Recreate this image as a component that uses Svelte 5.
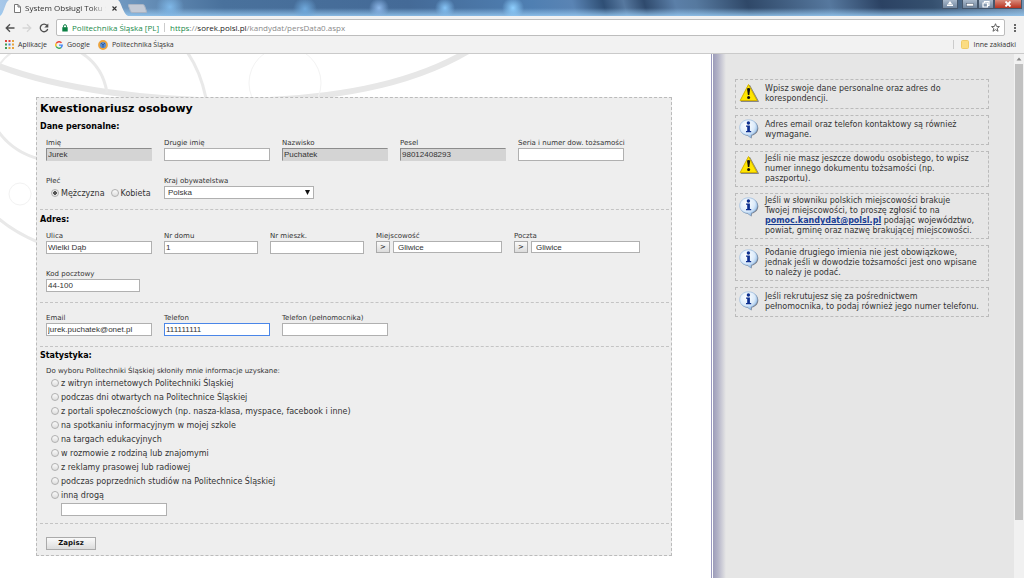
<script lang="ts">
    type Note = { kind: 'warning' | 'info'; text: string; mail?: string; rest?: string };

    // Personal data
    let firstName = $state('Jurek');
    let secondName = $state('');
    let lastName = $state('Puchatek');
    let pesel = $state('98012408293');
    let documentNumber = $state('');
    let gender = $state('m');
    let country = $state('Polska');

    // Address and contact
    let street = $state('Wielki Dąb');
    let house = $state('1');
    let flat = $state('');
    let town = $state('Gliwice');
    let post = $state('Gliwice');
    let postCode = $state('44-100');
    let email = $state('jurek.puchatek@onet.pl');
    let phone = $state('111111111');
    let proxyPhone = $state('');

    // Survey
    let source = $state('');
    let otherSource = $state('');

    let address = $state('https://sorek.polsl.pl/kandydat/persData0.aspx');

    const sources = [
        'z witryn internetowych Politechniki Śląskiej',
        'podczas dni otwartych na Politechnice Śląskiej',
        'z portali społecznościowych (np. nasza-klasa, myspace, facebook i inne)',
        'na spotkaniu informacyjnym w mojej szkole',
        'na targach edukacyjnych',
        'w rozmowie z rodziną lub znajomymi',
        'z reklamy prasowej lub radiowej',
        'podczas poprzednich studiów na Politechnice Śląskiej',
        'inną drogą'
    ];

    // Line breaks in the texts are kept by white-space: pre-line
    const notes: Note[] = [
        { kind: 'warning', text: 'Wpisz swoje dane personalne oraz adres do\nkorespondencji.' },
        { kind: 'info', text: 'Adres email oraz telefon kontaktowy są również\nwymagane.' },
        { kind: 'warning', text: 'Jeśli nie masz jeszcze dowodu osobistego, to wpisz\nnumer innego dokumentu tożsamości (np.\npaszportu).' },
        {
            kind: 'info',
            text: 'Jeśli w słowniku polskich miejscowości brakuje\nTwojej miejscowości, to proszę zgłosić to na\n',
            mail: 'pomoc.kandydat@polsl.pl',
            rest: ' podając województwo,\npowiat, gminę oraz nazwę brakującej miejscowości.'
        },
        { kind: 'info', text: 'Podanie drugiego imienia nie jest obowiązkowe,\njednak jeśli w dowodzie tożsamości jest ono wpisane\nto należy je podać.' },
        { kind: 'info', text: 'Jeśli rekrutujesz się za pośrednictwem\npełnomocnika, to podaj również jego numer telefonu.' }
    ];

    const appColors = ['#e0433a', '#e0433a', '#e8a33d', '#3f9b57', '#4a80d8', '#e8a33d', '#3f9b57', '#e8a33d', '#e8a33d'];

    function focusOnMount(node: HTMLInputElement) {
        node.focus();
        node.setSelectionRange(node.value.length, node.value.length);
    }
</script>

<div class="window">
    <header>
        <div class="titlebar">
            <div class="tab">
                <svg class="tab-shape" viewBox="0 0 130 16" preserveAspectRatio="none" aria-hidden="true">
                    <path d="M0 16 C4 14 5 2 9 0 H119 C122 1 124 14 129 16 Z" fill="#f2f2f2" />
                </svg>
                <svg class="page-icon" width="7" height="9" viewBox="0 0 7 9" aria-hidden="true">
                    <path d="M.5 .5 H4 L6.500 3 V8.500 H.5 Z M4 .5 V3 H6.500" fill="#fff" stroke="#777" />
                </svg>
                <span class="tab-title">System Obsługi Toku Studiów</span>
                <button class="tab-close" aria-label="Zamknij kartę">
                    <svg width="5" height="5" viewBox="0 0 5 5"><path d="M.5 .5 L4.500 4.500 M4.500 .5 L.5 4.500" stroke="#333" stroke-width="1.100" /></svg>
                </button>
            </div>
            <button class="new-tab" aria-label="Nowa karta"></button>
            <div class="window-buttons">
                <button class="user" aria-label="Użytkownik">
                    <svg width="8" height="6" viewBox="0 0 8 6"><path d="M4 0 L6 3 H2 Z M1 3.500 H7 V5 H1 Z" fill="#fff" /></svg>
                </button>
                <button class="minimise" aria-label="Minimalizuj">
                    <svg width="8" height="6" viewBox="0 0 8 6"><rect x=".5" y="2.500" width="7" height="2.500" fill="#fff" stroke="#4d5b6d" stroke-width=".5" /></svg>
                </button>
                <button class="restore" aria-label="Przywróć">
                    <svg width="8" height="7" viewBox="0 0 8 7"><path d="M2.500 1.500 V.5 H7 V4.500 H6 M1 2 H5.500 V6 H1 Z" fill="none" stroke="#fff" stroke-width="1.200" /></svg>
                </button>
                <button class="close" aria-label="Zamknij">
                    <svg width="8" height="6" viewBox="0 0 8 6"><path d="M1.500 .5 L6.500 5.500 M6.500 .5 L1.500 5.500" stroke="#fff" stroke-width="1.800" /></svg>
                </button>
            </div>
        </div>

        <div class="toolbar">
            <button aria-label="Wstecz">
                <svg width="10" height="10" viewBox="0 0 10 10"><path d="M9.500 5 H1.500 M5 1.200 L1.200 5 L5 8.800" fill="none" stroke="#505050" stroke-width="1.300" /></svg>
            </button>
            <button aria-label="Dalej">
                <svg width="10" height="10" viewBox="0 0 10 10"><path d="M.5 5 H8.500 M5 1.200 L8.800 5 L5 8.800" fill="none" stroke="#d6d6d6" stroke-width="1.300" /></svg>
            </button>
            <button aria-label="Odśwież">
                <svg width="10" height="10" viewBox="0 0 10 10">
                    <path d="M8 2.500 A3.800 3.800 0 1 0 8.700 6" fill="none" stroke="#505050" stroke-width="1.300" />
                    <path d="M9.300 .5 V4.500 H5.300 Z" fill="#505050" />
                </svg>
            </button>
            <div class="omnibox">
                <svg width="6" height="8" viewBox="0 0 6 8" aria-hidden="true">
                    <path d="M1.500 3.500 V2.200 A1.500 1.500 0 0 1 4.500 2.200 V3.500" fill="none" stroke="#0b8043" />
                    <rect x=".3" y="3.200" width="5.400" height="4.300" fill="#0b8043" />
                </svg>
                <span class="owner">Politechnika Śląska [PL]</span>
                <div class="url">
                    <span class="scheme">https</span>://<span class="host">sorek.polsl.pl</span>/kandydat/persData0.aspx
                    <input type="text" aria-label="Adres strony" bind:value={address} />
                </div>
                <button class="star" aria-label="Dodaj zakładkę">
                    <svg width="9" height="9" viewBox="0 0 10 10"><path d="M5 .8 L6.200 3.800 L9.400 4 L6.900 6 L7.800 9.200 L5 7.400 L2.200 9.200 L3.100 6 L.6 4 L3.800 3.800 Z" fill="none" stroke="#555" /></svg>
                </button>
            </div>
            <button class="more" aria-label="Menu">
                <svg width="4" height="10" viewBox="0 0 4 10"><path d="M1 1 H3 V3 H1 Z M1 4 H3 V6 H1 Z M1 7 H3 V9 H1 Z" fill="#666" /></svg>
            </button>
        </div>

        <nav class="bookmarks">
            <a href="#apps">
                <svg width="9" height="9" viewBox="0 0 9 9" aria-hidden="true">
                    {#each appColors as color, i}
                        <rect x={(i % 3) * 3.5} y={Math.floor(i / 3) * 3.5} width="2" height="2" fill={color} />
                    {/each}
                </svg>
                Aplikacje
            </a>
            <a href="#google">
                <svg width="8" height="8" viewBox="0 0 8 8" fill="none" stroke-width="1.400" aria-hidden="true">
                    <path d="M6.500 1.800 A3.200 3.200 0 0 0 1.200 2.500" stroke="#ea4335" />
                    <path d="M1.200 2.500 A3.200 3.200 0 0 0 1.200 5.500" stroke="#fbbc05" />
                    <path d="M1.200 5.500 A3.200 3.200 0 0 0 6 6.600" stroke="#34a853" />
                    <path d="M6 6.600 A3.200 3.200 0 0 0 7.200 4.100 H4" stroke="#4285f4" />
                </svg>
                Google
            </a>
            <a href="#polsl">
                <svg width="10" height="10" viewBox="0 0 10 10" aria-hidden="true">
                    <circle cx="5" cy="5" r="4" fill="#5b8ed0" stroke="#eda43c" stroke-width="1.800" />
                    <path d="M3 3 L5 5 L7 3 M5 5 V7.500" stroke="#2f5a9c" fill="none" />
                </svg>
                Politechnika Śląska
            </a>
            <a class="other" href="#other">
                <svg width="8" height="9" viewBox="0 0 8 9" aria-hidden="true">
                    <rect x=".5" y=".5" width="7" height="8" rx="1" fill="#fbdc82" stroke="#efcb68" />
                </svg>
                Inne zakładki
            </a>
        </nav>
    </header>

    <div class="page">
        <main>
            <svg class="backdrop" width="480" height="220" viewBox="0 54 480 220" fill="none" aria-hidden="true">
                <path d="M-4 65 C60 90 150 100 230 101 C330 100 410 86 470 50" stroke="#e7e7e7" stroke-width="6" />
                <path d="M0 64 Q5 57 11 53" stroke="#ececec" stroke-width="2" />
                <path d="M80 52 Q103 66 107 93" stroke="#e9e9e9" stroke-width="3" />
                <path d="M187 52 Q200 70 206 98" stroke="#e9e9e9" stroke-width="3" />
                <circle cx="285" cy="83" r="36" stroke="#f3f3f3" />
                <path d="M-2 131 Q14 153 40 159" stroke="#e9e9e9" stroke-width="3" />
                <circle cx="20" cy="194" r="11" stroke="#f2f2f2" />
                <path d="M-2 218 Q14 232 40 243" stroke="#e9e9e9" stroke-width="3" />
            </svg>

            <form class="panel" onsubmit={(e) => e.preventDefault()}>
                <h1>Kwestionariusz osobowy</h1>

                <section>
                    <h2>Dane personalne:</h2>
                    <div class="row">
                        <label class="field">Imię<input type="text" readonly bind:value={firstName} /></label>
                        <label class="field">Drugie imię<input type="text" bind:value={secondName} /></label>
                        <label class="field">Nazwisko<input type="text" readonly bind:value={lastName} /></label>
                        <label class="field">Pesel<input type="text" readonly bind:value={pesel} /></label>
                        <label class="field">Seria i numer dow. tożsamości<input type="text" bind:value={documentNumber} /></label>
                    </div>
                    <div class="row">
                        <div class="field" role="radiogroup" aria-labelledby="gender-label">
                            <span id="gender-label">Płeć</span>
                            <div class="genders">
                                <label class="choice"><input type="radio" name="gender" value="m" bind:group={gender} />Mężczyzna</label>
                                <label class="choice"><input type="radio" name="gender" value="k" bind:group={gender} />Kobieta</label>
                            </div>
                        </div>
                        <label class="field country">
                            Kraj obywatelstwa
                            <select bind:value={country}>
                                <option>Polska</option>
                            </select>
                        </label>
                    </div>
                </section>

                <section>
                    <h2>Adres:</h2>
                    <div class="row">
                        <label class="field">Ulica<input type="text" bind:value={street} /></label>
                        <label class="field short">Nr domu<input type="text" bind:value={house} /></label>
                        <label class="field short">Nr mieszk.<input type="text" bind:value={flat} /></label>
                        <div class="field lookup">
                            <label for="town">Miejscowość</label>
                            <div class="lookup-row">
                                <button type="button" aria-label="Wybierz miejscowość">&gt;</button>
                                <input id="town" type="text" bind:value={town} />
                            </div>
                        </div>
                        <div class="field lookup">
                            <label for="post">Poczta</label>
                            <div class="lookup-row">
                                <button type="button" aria-label="Wybierz pocztę">&gt;</button>
                                <input id="post" type="text" bind:value={post} />
                            </div>
                        </div>
                    </div>
                    <div class="row">
                        <label class="field short">Kod pocztowy<input type="text" bind:value={postCode} /></label>
                    </div>
                </section>

                <section>
                    <div class="row contact">
                        <label class="field">Email<input type="text" bind:value={email} /></label>
                        <label class="field">Telefon<input type="text" bind:value={phone} use:focusOnMount /></label>
                        <label class="field">Telefon (pełnomocnika)<input type="text" bind:value={proxyPhone} /></label>
                    </div>
                </section>

                <section class="survey">
                    <h2>Statystyka:</h2>
                    <p id="survey-label">Do wyboru Politechniki Śląskiej skłoniły mnie informacje uzyskane:</p>
                    <div class="sources" role="radiogroup" aria-labelledby="survey-label">
                        {#each sources as item}
                            <label class="choice"><input type="radio" name="source" value={item} bind:group={source} />{item}</label>
                        {/each}
                        <input class="other-source" type="text" aria-label="Inna droga" bind:value={otherSource} />
                    </div>
                </section>

                <div class="actions">
                    <button type="submit">Zapisz</button>
                </div>
            </form>
        </main>

        <aside>
            {#each notes as note}
                <div class="note">
                    {#if note.kind === 'warning'}
                        <svg width="20" height="20" viewBox="0 0 20 20" aria-hidden="true">
                            <path d="M10.500 2 L19.500 18.500 H2 Z" fill="#888" stroke="#888" stroke-linejoin="round" />
                            <path d="M9.500 1.500 L18 17.500 H1.200 Z" fill="#ffe500" stroke="#d4b400" stroke-linejoin="round" />
                            <path d="M8 5.500 Q9.600 4.300 11.200 5.500 L10.300 12 H8.900 Z" fill="#111" />
                            <circle cx="9.600" cy="14.600" r="1.500" fill="#111" />
                        </svg>
                    {:else}
                        <svg width="20" height="20" viewBox="0 0 20 20" aria-hidden="true">
                            <defs>
                                <radialGradient id="bubble" cx=".4" cy=".3" r=".75">
                                    <stop offset="0" stop-color="#fff" />
                                    <stop offset=".6" stop-color="#dcebfa" />
                                    <stop offset="1" stop-color="#7fb0e4" />
                                </radialGradient>
                            </defs>
                            <path d="M10 1.500 C15.500 1.500 19.300 4.800 19.300 9.300 C19.300 13 16.500 15.800 13 16.600 L12.500 19.500 L9 16.900 C4 16.500 1.500 13 1.500 9.300 Z" fill="#6f7480" />
                            <path d="M9.500 .8 C14.600 .8 18.300 4.200 18.300 8.600 C18.300 12.200 15.700 15 12.200 15.900 L11.800 18.800 L8.600 16.300 C3.900 15.900 .7 12.700 .7 8.600 C.7 4.200 4.400 .8 9.500 .8 Z" fill="url(#bubble)" stroke="#8fb3dc" stroke-width=".6" />
                            <circle cx="9.400" cy="4" r="1.700" fill="#0d2f8f" />
                            <path d="M7 6.600 H10.900 V12 H12.200 V13.200 H7 V12 H8.200 V7.800 H7 Z" fill="#0d2f8f" />
                        </svg>
                    {/if}
                    <p>{note.text}{#if note.mail}<a href="mailto:{note.mail}">{note.mail}</a>{note.rest}{/if}</p>
                </div>
            {/each}
        </aside>

        <div class="scrollbar" aria-hidden="true">
            <div class="scroll-arrow">
                <svg width="6" height="4" viewBox="0 0 6 4"><path d="M3 .5 L5.500 3.500 H.5 Z" fill="#888" /></svg>
            </div>
            <div class="thumb"></div>
        </div>
    </div>
</div>

<style>
    :global(body) {
        margin: 0;
        background: #fff;
    }

    .window {
        display: flex;
        flex-direction: column;
        min-height: 100vh;
        font-family: "DejaVu Sans", Verdana, sans-serif;
        font-size: 8px;
        color: #333;
    }

    * {
        box-sizing: border-box;
    }

    button {
        margin: 0;
        padding: 0;
        border: 0;
        background: none;
        font: inherit;
        color: inherit;
    }

    svg {
        display: block;
        flex: none;
    }

    /* Browser frame */
    header {
        font-family: "Open Sans", "Segoe UI", sans-serif;
        background: #f2f2f2;
        border-bottom: 1px solid #cacaca;
    }

    .titlebar {
        display: flex;
        align-items: flex-start;
        height: 16px;
        background:
            radial-gradient(circle at 170px 7px, #7fb8e8 0, transparent 14px),
            radial-gradient(circle at 305px 9px, #6fa9dc 0, transparent 12px),
            radial-gradient(circle at 379px 8px, #8db8ea 0, transparent 10px),
            radial-gradient(circle at 445px 8px, #86c4f6 0, transparent 10px),
            radial-gradient(circle at 513px 8px, #8fd0ff 0, transparent 11px),
            linear-gradient(to bottom, transparent 8px, rgba(150, 200, 240, 0.85) 16px),
            linear-gradient(75deg, #a9c9ea 0, #7fa8cf 8%, #49719c 22%, #446a97 40%, #4f7fb2 52%, #5a84b4 56%, #2f4f75 59%, #56789f 61%, #2f4a6d 63%, #5b7fa8 66%, #56799f 68%, #2f4868 73%, #56789e 81%, #2b4263 86%, #35506f 91%, #7696b6 100%);
    }

    .tab {
        position: relative;
        display: flex;
        align-items: center;
        width: 129px;
        height: 16px;
        padding: 0 12px 0 14px;
    }

    .tab-shape {
        position: absolute;
        inset: 0;
        width: 100%;
        height: 100%;
    }

    .page-icon,
    .tab-title,
    .tab-close {
        position: relative;
    }

    .tab-title {
        flex: 1;
        margin: 0 6px 0 4px;
        overflow: hidden;
        white-space: nowrap;
        line-height: 14px;
        mask-image: linear-gradient(to right, #000 82%, transparent);
    }

    .new-tab {
        width: 17px;
        height: 9px;
        margin-top: 4px;
        background: #c3cad6;
        border: 1px solid #a9b4c4;
        border-radius: 2px;
        transform: skewX(20deg);
    }

    .window-buttons {
        display: flex;
        margin-left: auto;
        margin-right: 2px;
    }

    .window-buttons button {
        display: flex;
        align-items: center;
        justify-content: center;
        width: 16px;
        height: 9px;
        background: linear-gradient(#a9b9cb, #71869f);
        border: 1px solid #45566b;
        border-top: 0;
    }

    .window-buttons .user {
        margin-right: 4px;
    }

    .window-buttons .close {
        width: 28px;
        background: linear-gradient(#d98a7a, #b83320);
    }

    .toolbar {
        display: flex;
        align-items: center;
        gap: 7px;
        padding: 3px 6px 0 5px;
    }

    .omnibox {
        flex: 1;
        display: flex;
        align-items: center;
        height: 17px;
        padding: 0 4px 0 5px;
        background: #fff;
        border: 1px solid #bdbdbd;
        border-radius: 2px;
    }

    .owner {
        margin-left: 4px;
        padding-right: 5px;
        border-right: 1px solid #ccc;
        line-height: 9px;
        color: #1b8a4b;
    }

    .url {
        position: relative;
        flex: 1;
        margin-left: 5px;
        line-height: 15px;
        color: #8a8a8a;
    }

    .scheme {
        color: #1b8a4b;
    }

    .host {
        color: #222;
    }

    .more {
        padding: 0 1px;
    }

    .bookmarks {
        display: flex;
        align-items: center;
        gap: 8px;
        height: 17px;
        padding: 0 8px 0 5px;
        font-size: 7px;
    }

    .bookmarks a {
        display: flex;
        align-items: center;
        gap: 4px;
        color: #333;
        text-decoration: none;
    }

    .bookmarks .other {
        margin-left: auto;
        padding-left: 7px;
        border-left: 1px solid #ccc;
    }

    /* Page */
    .page {
        flex: 1;
        display: flex;
    }

    main {
        position: relative;
        flex: 1;
        padding: 43px 39px 22px 36px;
    }

    .backdrop {
        position: absolute;
        top: 0;
        left: 0;
    }

    .panel {
        position: relative;
        padding: 2px 2px 2px 3px;
        background: #eee;
        border: 1px dashed #bbb;
    }

    h1,
    h2,
    p {
        margin: 0;
    }

    h1 {
        font-size: 11px;
        line-height: 17px;
        color: #000;
    }

    h2 {
        font-size: 8px;
        line-height: 12px;
        color: #000;
    }

    section {
        padding: 4px 0 10px;
        border-bottom: 1px dashed #c4c4c4;
    }

    section h2 {
        margin-bottom: 6px;
    }

    .row {
        display: flex;
        gap: 12px;
        margin-left: 6px;
    }

    .row + .row {
        margin-top: 16px;
    }

    .field {
        display: flex;
        flex-direction: column;
        width: 106px;
        font-size: 7px;
        line-height: 9px;
        white-space: nowrap;
    }

    .field.short {
        width: 94px;
    }

    .field.country {
        width: 150px;
    }

    .field.lookup {
        width: 126px;
    }

    input[type="text"],
    select {
        width: 100%;
        height: 13px;
        margin: 0;
        padding: 0 1px;
        background: #fff;
        border: 1px solid #b0b0b0;
        border-radius: 0;
        font-family: "Liberation Sans", Arial, sans-serif;
        font-size: 8px;
        line-height: 11px;
        color: #333;
        outline: none;
    }

    input[type="text"]:focus {
        border-color: #4a86e8;
    }

    input[type="text"]:read-only {
        background: #d4d4d4;
        border-color: #8c8c8c #d4d4d4 #d4d4d4 #8c8c8c;
    }

    /* Editable layer over the coloured address */
    .url input[type="text"] {
        position: absolute;
        inset: 0;
        height: 100%;
        padding: 0;
        border: 0;
        background: none;
        color: transparent;
    }

    select {
        appearance: none;
        padding: 0 3px;
        background: #fff url("data:image/svg+xml,%3Csvg xmlns='http://www.w3.org/2000/svg' width='5' height='5'%3E%3Cpath d='M0 0H5L2.500 5Z' fill='%23111'/%3E%3C/svg%3E") no-repeat right 3px center;
    }

    .genders {
        display: flex;
        gap: 6px;
        padding: 3px 0 0 5px;
    }

    .choice {
        display: flex;
        align-items: center;
        gap: 2px;
        font-size: 8px;
        line-height: 14px;
        white-space: nowrap;
    }

    .genders .choice {
        line-height: 10px;
    }

    input[type="radio"] {
        appearance: none;
        flex: none;
        width: 8px;
        height: 8px;
        margin: 0 0 2px;
        background: linear-gradient(#fafafa, #dedede);
        border: 1px solid #b0b0b0;
        border-radius: 50%;
    }

    input[type="radio"]:checked {
        background: radial-gradient(circle, #555 0 2px, #e8e8e8 2px);
    }

    .lookup-row {
        display: flex;
        gap: 3px;
    }

    .lookup-row button,
    .actions button {
        background: linear-gradient(#fafafa, #dcdcdc);
        border: 1px solid #aaa;
        color: #111;
    }

    .lookup-row button {
        flex: none;
        width: 14px;
        height: 12px;
        line-height: 10px;
    }

    .lookup-row input[type="text"] {
        flex: 1;
        height: 12px;
        padding: 0 4px;
    }

    .contact {
        padding-top: 7px;
    }

    .survey {
        padding: 3px 0 7px;
    }

    .survey h2 {
        margin-bottom: 5px;
    }

    .survey p {
        margin: 0 0 1px 6px;
        font-size: 7px;
        line-height: 9px;
    }

    .sources {
        padding-left: 11px;
    }

    input.other-source {
        display: block;
        width: 106px;
        margin-left: 10px;
    }

    .actions {
        padding: 13px 6px 3px;
    }

    .actions button {
        width: 50px;
        height: 13px;
        font-size: 7px;
        font-weight: bold;
        line-height: 11px;
    }

    /* Hints */
    aside {
        display: flex;
        flex-direction: column;
        gap: 6px;
        width: 303px;
        padding: 25px 25px 20px 23px;
        border-left: 1px solid #9a9ac0;
        background: linear-gradient(to right, #fff 0 1px, #9c9cba 1px, #b4b4c8 6px, #e6e6e6 14px);
    }

    .note {
        display: flex;
        align-items: center;
        gap: 6px;
        min-height: 30px;
        padding: 2px 3px;
        border: 1px dashed #bbb;
    }

    .note svg {
        align-self: flex-start;
        margin-top: 1px;
    }

    .note p {
        line-height: 10px;
        white-space: pre-line;
    }

    .note a {
        font-weight: bold;
        color: #1b3f94;
    }

    .scrollbar {
        display: flex;
        flex-direction: column;
        width: 10px;
        background: #f1f1f1;
    }

    .scroll-arrow {
        display: flex;
        align-items: center;
        justify-content: center;
        height: 10px;
    }

    .thumb {
        height: 87%;
        margin: 0 1px;
        background: #c1c1c1;
    }
</style>
